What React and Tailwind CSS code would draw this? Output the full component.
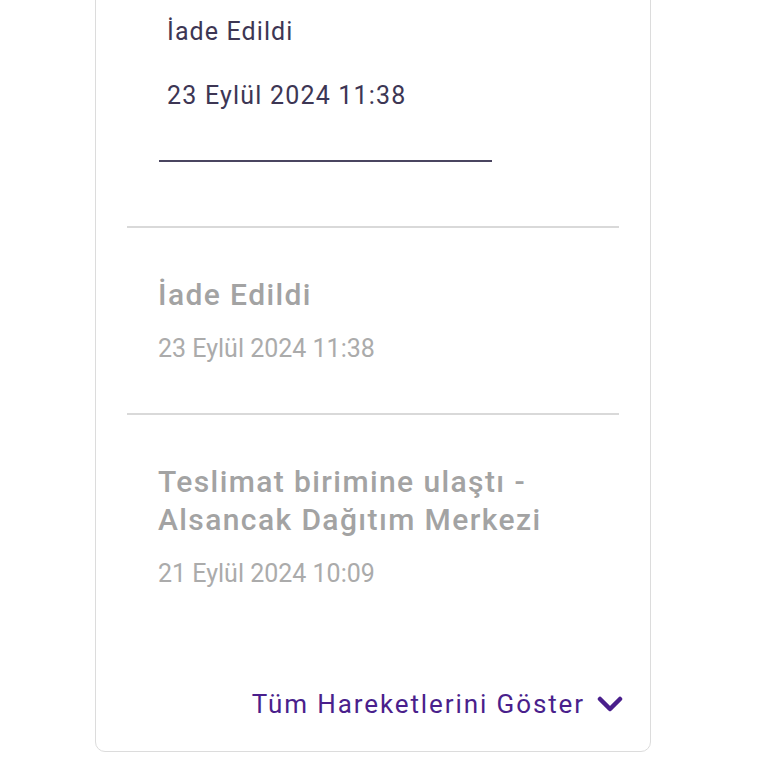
import React from 'react';

const events = [
  { id: 1, title: ['İade Edildi'], date: '23 Eylül 2024 11:38' },
  { id: 2, title: ['Teslimat birimine ulaştı -', 'Alsancak Dağıtım Merkezi'], date: '21 Eylül 2024 10:09' },
];

function ChevronDown() {
  return (
    <svg width="26" height="18" viewBox="0 0 26 18" fill="none">
      <path d="M3 4 L13 14 L23 4" stroke="#4a1f8c" strokeWidth="4.5" strokeLinecap="round" strokeLinejoin="round" />
    </svg>
  );
}

export default function App() {
  return (
    <div className="min-h-screen bg-white overflow-hidden font-['Roboto','Liberation_Sans',sans-serif]">
      <div className="ml-[95px] w-[556px] mt-[-20px] border border-[#dcdcdc] rounded-b-[10px] bg-white pb-[30px]">
        {/* Current status */}
        <div className="pt-[35px] pl-[63px]">
          <div className="pl-[8px] text-[25px] leading-[32px] tracking-[1.1px] text-[#3d3654]">İade Edildi</div>
          <div className="pl-[8px] mt-[32px] text-[25px] leading-[32px] tracking-[1.2px] text-[#3d3654]">23 Eylül 2024 11:38</div>
          <div className="mt-[48px] w-[333px] h-[2px] bg-[#4a4560]" />
        </div>

        {/* History */}
        <div className="mt-[64px] px-[31px]">
          {events.map(ev => (
            <div key={ev.id} className="border-t-2 border-[#d9d9d9]">
              <div className="pl-[31px] pt-[48px] text-[30px] leading-[38px] font-medium tracking-[1.4px] text-[#a3a3a3]">
                {ev.title.map(line => (
                  <div key={line}>{line}</div>
                ))}
              </div>
              <div className="pl-[31px] mt-[21px] text-[25px] leading-[28px] text-[#ababab]">{ev.date}</div>
              {ev.id === 1 && <div className="h-[50px]" />}
            </div>
          ))}
        </div>

        {/* Show all */}
        <div className="mt-[99px] pr-[27px] flex items-center justify-end gap-[12px]">
          <span className="text-[26px] leading-[34px] tracking-[1.9px] text-[#4a1f8c]">Tüm Hareketlerini Göster</span>
          <ChevronDown />
        </div>
      </div>
    </div>
  );
}
